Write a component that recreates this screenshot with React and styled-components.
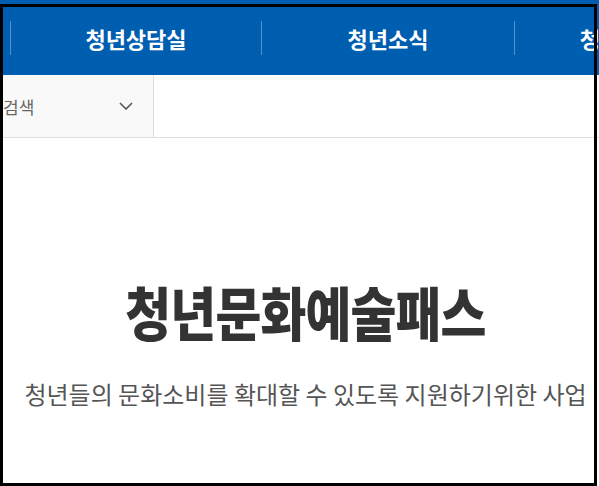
import React from "react";
import styled, { createGlobalStyle } from "styled-components";

const Global = createGlobalStyle`
  html, body { margin: 0; padding: 0; background: #fff; }
  body { font-family: "Noto Sans CJK KR", "Noto Sans", sans-serif; overflow: hidden; }
  * { box-sizing: border-box; }
`;

const Page = styled.div`
  width: 599px;
  height: 486px;
  overflow: hidden;
  position: relative;
  background: #fff;
`;

const Header = styled.header`
  height: 75px;
  background: #005eb1;
  display: flex;
  align-items: center;
  overflow: hidden;
`;

const NavList = styled.ul`
  list-style: none;
  margin: 0;
  padding: 0 0 0 10px;
  display: flex;
  flex-shrink: 0;
`;

const NavItem = styled.li`
  width: ${(p) => p.$w}px;
  flex-shrink: 0;
  border-left: 1px solid rgba(255, 255, 255, 0.32);
  height: 34px;
  display: flex;
  align-items: center;
  justify-content: center;
  color: #fff;
  font-size: 22px;
  font-weight: 700;
  white-space: nowrap;
`;

const SearchRow = styled.div`
  height: 63px;
  display: flex;
  border-bottom: 1px solid #dedede;
`;

const SelectBox = styled.div`
  width: 154px;
  background: #f9f9f9;
  border-right: 1px solid #dedede;
  display: flex;
  align-items: center;
  justify-content: space-between;
  padding: 0 20px 0 3px;
  color: #666;
  font-size: 17px;
`;

const Content = styled.section`
  padding: 141px 0 0 12px;
  display: flex;
  flex-direction: column;
  align-items: center;
`;

const Title = styled.h1`
  margin: 0;
  font-size: 58px;
  font-weight: 900;
  color: #333;
  line-height: 64px;
  letter-spacing: -1px;
  transform: scaleX(0.86);
  white-space: nowrap;
`;

const Subtitle = styled.p`
  margin: 36px 0 0;
  font-size: 24px;
  color: #555;
  line-height: 30px;
  white-space: nowrap;
`;

const Frame = styled.div`
  position: absolute;
  top: 4px;
  left: 0;
  width: 597px;
  height: 482px;
  border: 3px solid #000;
  pointer-events: none;
`;

export default function App() {
  return (
    <Page>
      <Global />
      <Header>
        <NavList>
          <NavItem $w={251}>청년상담실</NavItem>
          <NavItem $w={253}>청년소식</NavItem>
          <NavItem $w={252}>청년정책제안</NavItem>
        </NavList>
      </Header>
      <SearchRow>
        <SelectBox>
          <span>검색</span>
          <svg width="14" height="8" viewBox="0 0 14 8" fill="none">
            <path d="M1 1l6 6 6-6" stroke="#555" strokeWidth="1.6" />
          </svg>
        </SelectBox>
      </SearchRow>
      <Content>
        <Title>청년문화예술패스</Title>
        <Subtitle>청년들의 문화소비를 확대할 수 있도록 지원하기위한 사업</Subtitle>
      </Content>
      <Frame />
    </Page>
  );
}
